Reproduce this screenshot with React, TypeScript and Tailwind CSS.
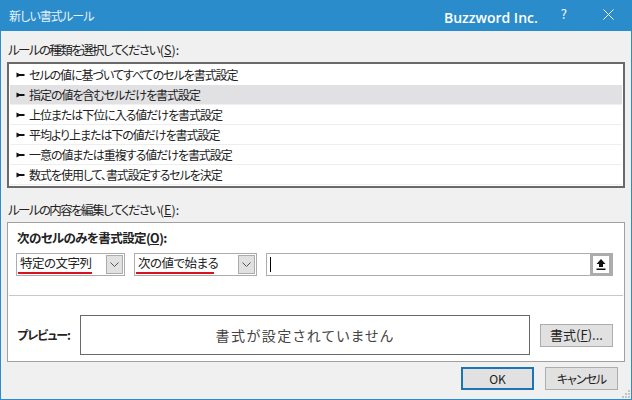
const FONT = "font-['Noto_Sans_CJK_JP','Noto_Sans',sans-serif]";

const RULES = [
  'セルの値に基づいてすべてのセルを書式設定',
  '指定の値を含むセルだけを書式設定',
  '上位または下位に入る値だけを書式設定',
  '平均より上または下の値だけを書式設定',
  '一意の値または重複する値だけを書式設定',
  '数式を使用して、書式設定するセルを決定',
];

function Pointer() {
  return (
    <svg width="9" height="6" viewBox="0 0 9 6" className="mr-[4px] shrink-0">
      <path d="M0.5 0.5 L3.5 2 H8.5 V4 H3.5 L0.5 5.5 Z" fill="#111" />
    </svg>
  );
}

function Combo({ label, width, lineWidth }: { label: string; width: string; lineWidth: string }) {
  return (
    <div className={`relative flex h-[23px] items-center border border-[#acacac] pl-[3px] pr-[1px] ${width}`}>
      <span className="flex-1 pb-[2px] text-[12.5px] leading-none tracking-[-0.5px] text-[#222]">{label}</span>
      <span className="flex h-[19px] w-[17px] items-center justify-center border border-[#acacac] bg-[#e1e1e1]">
        <svg width="9" height="5" viewBox="0 0 9 5">
          <path d="M0.5 0.5 L4.5 4.5 L8.5 0.5" fill="none" stroke="#555" strokeWidth="1" />
        </svg>
      </span>
      <span className={`absolute bottom-[1px] left-[1px] h-[2px] bg-[#d9121f] ${lineWidth}`} />
    </div>
  );
}

function Button({ children, primary, width }: { children: React.ReactNode; primary?: boolean; width: string }) {
  return (
    <div
      className={`flex h-[23px] items-center justify-center text-[12px] text-[#222] ${width} ${
        primary ? 'border-2 border-[#1b75b5] bg-[#e1e1e1]' : 'border border-[#adadad] bg-[#e1e1e1]'
      }`}
    >
      {children}
    </div>
  );
}

function SectionLabel({ text, accel }: { text: string; accel: string }) {
  return (
    <div className="h-[22px] pl-[1px] text-[12.5px] leading-[20px] text-[#222]">
      <span className="tracking-[-1.6px]">{text}</span>
      <span className="ml-[1px]">
        (<span className="underline">{accel}</span>):
      </span>
    </div>
  );
}

export default function App() {
  return (
    <div className={`relative flex h-[400px] w-[632px] flex-col overflow-hidden border-x border-b border-[#2b8ccb] bg-[#f0f0f0] ${FONT} [font-feature-settings:'palt']`}>
      {/* title bar */}
      <div className="-mx-px flex h-[31px] shrink-0 items-center bg-[#2b8ccb] pl-[9px] text-white">
        <span className="text-[12px] tracking-[-0.9px] opacity-90">新しい書式ルール</span>
        <span className="ml-auto mt-[4px] font-['Open_Sans',sans-serif] text-[14px] font-semibold">Buzzword Inc.</span>
        <span className="ml-[23px] mb-[4px] text-[13px]">?</span>
        <svg width="11" height="11" viewBox="0 0 11 11" className="ml-[36px] mb-[3px] mr-[18px]">
          <path d="M0.5 0.5 L10.5 10.5 M10.5 0.5 L0.5 10.5" stroke="#fff" strokeWidth="1" />
        </svg>
      </div>

      <div className="flex flex-1 flex-col px-[6px]">
        <div className="mt-[9px]">
          <SectionLabel text="ルールの種類を選択してください" accel="S" />
        </div>

        <div className="flex h-[126px] w-[618px] flex-col border-2 border-[#696969] bg-white pt-px">
          {RULES.map((rule, i) => (
            <div
              key={rule}
              className={`ml-px mr-px flex h-[20px] shrink-0 items-center border-b pl-[6px] text-[12px] leading-none tracking-[-1.05px] text-[#222] ${
                i === 1 ? 'border-[#f0f0f0] bg-[#e1e1e4]' : 'border-[#eeeeee]'
              } ${i === 0 ? 'border-transparent' : ''}`}
            >
              <Pointer />
              {rule}
            </div>
          ))}
        </div>

        <div className="mt-[12px]">
          <SectionLabel text="ルールの内容を編集してください" accel="E" />
        </div>

        <div className="flex h-[140px] w-[618px] flex-col border border-[#a0a0a0] bg-white">
          <div className="mt-[6px] pl-[9px] text-[12.5px] font-bold leading-[18px] tracking-[-0.6px] text-[#222]">
            次のセルのみを書式設定(<span className="underline">O</span>):
          </div>
          <div className="mt-[6px] flex gap-[9px] pl-[8px]">
            <Combo label="特定の文字列" width="w-[109px]" lineWidth="w-[74px]" />
            <Combo label="次の値で始まる" width="w-[123px]" lineWidth="w-[78px]" />
            <div className="flex h-[23px] w-[347px] items-center border border-[#acacac] pl-[3px]">
              <span className="h-[15px] w-px bg-black" />
              <span className="ml-auto flex h-[23px] w-[22px] items-center justify-center border-[3px] border-[#acacac] bg-white">
                <svg width="10" height="11" viewBox="0 0 10 11">
                  <path d="M5 0 L9.5 5 H7 V8 H3 V5 H0.5 Z M0.5 9.5 H9.5 V11 H0.5 Z" fill="#111" />
                </svg>
              </span>
            </div>
          </div>
          <div className="ml-[1px] mt-[19px] h-px w-[614px] bg-[#c8c8c8]" />
          <div className="mt-[19px] flex items-center pl-[9px]">
            <span className="w-[63px] text-[12px] font-bold tracking-[-1px] text-[#222]">プレビュー:</span>
            <div className="flex h-[40px] w-[450px] items-center justify-center border border-[#696969] text-[14px] tracking-[1.5px] text-[#444]">
              書式が設定されていません
            </div>
            <div className="ml-[10px]">
              <Button width="w-[73px]">
                <span className="text-[13px]">
                  書式(<span className="underline">F</span>)...
                </span>
              </Button>
            </div>
          </div>
        </div>

        <div className="mt-[5px] flex justify-end gap-[11px] pr-[7px]">
          <Button primary width="w-[73px]">
            OK
          </Button>
          <Button width="w-[73px]">
            <span className="tracking-[-1px]">キャンセル</span>
          </Button>
        </div>
      </div>

      {/* resize grip */}
      <svg width="8" height="8" viewBox="0 0 8 8" className="absolute bottom-[1px] right-[1px]">
        <path d="M6 0h2v2H6z M3 3h2v2H3z M6 3h2v2H6z M0 6h2v2H0z M3 6h2v2H3z M6 6h2v2H6z" fill="#c4c4c4" />
      </svg>
    </div>
  );
}
